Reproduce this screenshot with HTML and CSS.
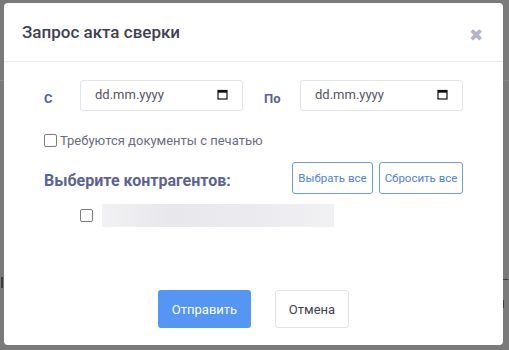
FILE: index.html
```html
<!DOCTYPE html>
<html lang="ru">
<head>
<meta charset="utf-8">
<title>Запрос акта сверки</title>
<link rel="stylesheet" href="styles.css">
</head>
<body>
<div class="backdrop">
  <span class="bg-line bg-line-1"></span>
  <span class="bg-mark bg-left"></span>
  <span class="bg-mark bg-right1"></span>
  <span class="bg-mark bg-right2"></span>
  <div class="modal">
    <div class="modal-header">
      <h2 class="modal-title">Запрос акта сверки</h2>
      <span class="close">✖</span>
    </div>
    <div class="modal-body">
      <div class="date-row">
        <span class="date-label">С</span>
        <div class="date-input">
          <span class="date-text">dd.mm.yyyy</span>
          <svg class="cal" width="11" height="11" viewBox="0 0 11 11"><rect x="1" y="1.5" width="9" height="8.5" fill="none" stroke="#111" stroke-width="1.2"/><rect x="1" y="1.5" width="9" height="2.2" fill="#111"/></svg>
        </div>
        <span class="date-label date-label-2">По</span>
        <div class="date-input">
          <span class="date-text">dd.mm.yyyy</span>
          <svg class="cal" width="11" height="11" viewBox="0 0 11 11"><rect x="1" y="1.5" width="9" height="8.5" fill="none" stroke="#111" stroke-width="1.2"/><rect x="1" y="1.5" width="9" height="2.2" fill="#111"/></svg>
        </div>
      </div>
      <label class="check-row">
        <span class="checkbox"></span>
        <span class="check-text">Требуются документы с печатью</span>
      </label>
      <div class="contr-row">
        <span class="contr-title">Выберите контрагентов:</span>
        <div class="contr-actions">
          <button class="btn-outline btn-select">Выбрать все</button>
          <button class="btn-outline btn-reset">Сбросить все</button>
        </div>
      </div>
      <div class="contr-item">
        <span class="checkbox"></span>
        <span class="blurred"></span>
      </div>
    </div>
    <div class="modal-footer">
      <button class="btn-primary">Отправить</button>
      <button class="btn-default">Отмена</button>
    </div>
  </div>
</div>
</body>
</html>
```
FILE: styles.css
```css
html, body {
  margin: 0;
  padding: 0;
}
body {
  background: #7a7a7a;
  font-family: Roboto, "Liberation Sans", Arial, sans-serif;
}
.backdrop {
  position: relative;
  width: 509px;
  height: 350px;
  padding: 3px 6px 5px 4px;
  box-sizing: border-box;
  overflow: hidden;
}
.bg-line {
  position: absolute;
  left: 0;
  width: 509px;
  height: 1px;
  background: #888;
}
.bg-line-1 { top: 80px; }
.bg-mark {
  position: absolute;
  width: 2px;
  background: #3c3c3c;
}
.bg-left { left: 1px; top: 277px; height: 11px; }
.bg-right1 { left: 503px; top: 279px; height: 1px; width: 5px; }
.bg-right2 { left: 503px; top: 300px; height: 8px; width: 1px; }
.modal {
  position: relative;
  width: 499px;
  height: 342px;
  background: #fff;
  border-radius: 4px;
  display: flex;
  flex-direction: column;
}
.modal-header {
  height: 58px;
  border-bottom: 1px solid #e9e9ef;
  display: flex;
  align-items: center;
  justify-content: space-between;
  padding: 0 20px 0 18px;
}
.modal-title {
  margin: 0;
  font-size: 17px;
  font-weight: 500;
  color: #3f3f52;
  letter-spacing: 0;
  padding-bottom: 1px;
}
.close {
  color: #b4b4c4;
  font-size: 17px;
  line-height: 1;
  margin-top: 7px;
}
.modal-body {
  padding: 18px 40px 0 40px;
  flex: 1;
}
.date-row {
  display: flex;
  align-items: center;
}
.date-label {
  width: 36px;
  font-size: 13px;
  font-weight: 700;
  color: #5b6396;
  padding-top: 6px;
}
.date-label-2 {
  margin-left: 21px;
}
.date-input {
  width: 163px;
  height: 31px;
  box-sizing: border-box;
  border: 1px solid #e3e3ea;
  border-radius: 3px;
  display: flex;
  align-items: center;
  justify-content: space-between;
  padding: 0 14px 0 14px;
}
.date-text {
  font-size: 13px;
  color: #545460;
  padding-bottom: 2px;
}
.cal {
  display: block;
  margin-bottom: 2px;
}
.check-row {
  display: flex;
  align-items: center;
  margin-top: 22px;
  gap: 3px;
}
.checkbox {
  width: 11px;
  height: 11px;
  border: 1px solid #7d7d7d;
  border-radius: 2px;
  background: #fff;
  flex: none;
}
.check-text {
  font-size: 13px;
  color: #6b6b80;
}
.contr-row {
  display: flex;
  align-items: center;
  justify-content: space-between;
  margin-top: 14px;
}
.contr-title {
  font-size: 16px;
  font-weight: 700;
  color: #5b6396;
  padding-top: 5px;
}
.contr-actions {
  display: flex;
  gap: 6px;
}
.btn-outline {
  height: 32px;
  background: #fff;
  border: 1px solid #6f9be8;
  border-radius: 3px;
  color: #4f82e0;
  font-family: Roboto, "Liberation Sans", Arial, sans-serif;
  font-size: 11.5px;
  padding: 0;
}
.btn-select { width: 81px; }
.btn-reset { width: 84px; }
.contr-item {
  display: flex;
  align-items: center;
  margin-top: 10px;
  padding-left: 36px;
  gap: 9px;
}
.blurred {
  width: 232px;
  height: 23px;
  background: linear-gradient(90deg, #f1f1f4 0%, #e8e8ec 30%, #ececf0 70%, #f1f1f4 100%);
}
.modal-footer {
  display: flex;
  justify-content: center;
  gap: 24px;
  padding: 0 0 17px 0;
}
.btn-primary {
  width: 93px;
  height: 38px;
  background: #5595f4;
  border: none;
  border-radius: 3px;
  color: #fff;
  font-family: Roboto, "Liberation Sans", Arial, sans-serif;
  font-size: 13px;
}
.btn-default {
  width: 74px;
  height: 38px;
  background: #fff;
  border: 1px solid #e3e3ea;
  border-radius: 3px;
  color: #3f3f50;
  font-family: Roboto, "Liberation Sans", Arial, sans-serif;
  font-size: 13px;
}
```
